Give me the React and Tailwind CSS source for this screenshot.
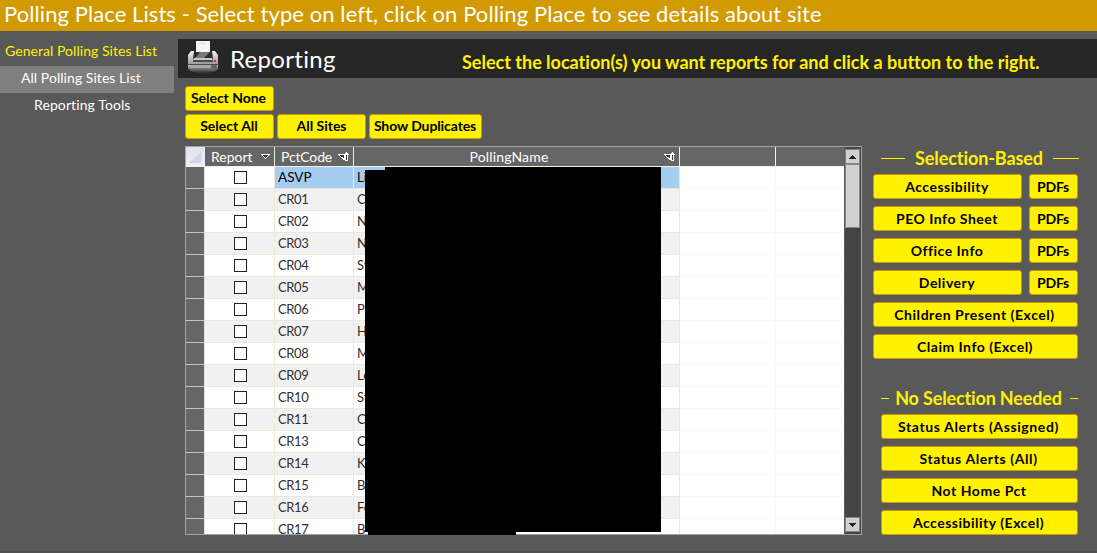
const rows = [
  ["ASVP", "Li"], ["CR01", "C"], ["CR02", "N"], ["CR03", "N"], ["CR04", "St"], ["CR05", "M"],
  ["CR06", "P"], ["CR07", "H"], ["CR08", "M"], ["CR09", "Le"], ["CR10", "St"], ["CR11", "C"],
  ["CR13", "C"], ["CR14", "K"], ["CR15", "B"], ["CR16", "Fe"], ["CR17", "B"],
];

function Button({ children, className = "pr-px tracking-[0.5px]" }) {
  return (
    <button
      className={`flex h-[25px] items-center justify-center whitespace-nowrap rounded-[3px] border border-[#d19a00] bg-[#fff200] text-[14px] leading-none font-bold text-black ${className}`}
    >
      {children}
    </button>
  );
}

function PrinterIcon() {
  return (
    <svg width="32" height="34" viewBox="0 0 32 34" className="block">
      <defs>
        <linearGradient id="side" x1="0" y1="0" x2="0" y2="1">
          <stop offset="0" stopColor="#f4f4f4" />
          <stop offset="1" stopColor="#9a9a9a" />
        </linearGradient>
        <linearGradient id="base" x1="0" y1="0" x2="0" y2="1">
          <stop offset="0" stopColor="#c4c4c4" />
          <stop offset="0.45" stopColor="#777" />
          <stop offset="1" stopColor="#303030" />
        </linearGradient>
      </defs>
      <path d="M1 25h30v4q-3 4-15 4T1 29z" fill="url(#base)" />
      <path d="M4 11h24l3 4v9H1v-9z" fill="url(#side)" />
      <path d="M7 11h18l1 8H6z" fill="#2c2c2c" />
      <path d="M13 12h10l-6 6H8z" fill="#777" />
      <path d="M9 1h14v11H9z" fill="#f7f7f7" />
      <path d="M11 3h8v1h-8z" fill="#ddd" />
      <path d="M7 18h18v2H7z" fill="#c9c9c9" />
      <path d="M6 20h20v2H6z" fill="#4c4c4c" />
      <path d="M0 24h32v1H0z" fill="#4a4a4a" />
      <path d="M3 25h20v3H3z" fill="#a9a9a9" />
      <path d="M24 25h6v4h-6z" fill="#686868" />
      <path d="M27 20h2v2h-2z" fill="#dc2348" />
      <path d="M27 26h2v2h-2z" fill="#35694e" />
    </svg>
  );
}

function FilterArrow() {
  return (
    <svg width="9" height="6" viewBox="0 0 9 6" className="block" shapeRendering="crispEdges">
      <path d="M0 0h9v1H8v1H7v1H6v1H5v1H4V4H3V3H2V2H1V1H0z" fill="#fff" />
      <path d="M2 1h5v1H6v1H5v1H4V3H3V2H2z" fill="#26364d" />
    </svg>
  );
}

function SortArrow() {
  return (
    <svg width="11" height="9" viewBox="0 0 11 9" className="block" shapeRendering="crispEdges">
      <path d="M0 2h7v6H5V7H4V6H3V5H2V4H1V3H0z" fill="#fff" />
      <path d="M2 3h4v3H5V5H3V4H2z" fill="#26364d" />
      <path d="M8 0h1v1h1v1h1v1h-1v6H7V3H6V2h1V1h1z" fill="#fff" />
      <path d="M8 3h1v5H8z" fill="#26364d" />
    </svg>
  );
}

function ScrollButton({ down = false }) {
  return (
    <div className="flex h-[15px] w-[15px] shrink-0 items-center justify-center border border-[#858585] bg-[#d0d0d0]">
      <svg width="7" height="4" viewBox="0 0 7 4" shapeRendering="crispEdges">
        <path d={down ? "M0 0h7v1H6v1H5v1H4v1H3V3H2V2H1V1H0z" : "M3 0h1v1h1v1h1v1h1v1H0V3h1V2h1V1h1z"} fill="#222" />
      </svg>
    </div>
  );
}

function GridHeader() {
  return (
    <div className="flex h-5 shrink-0 border-b border-[#f4f2e6] bg-[#666] text-[14px] leading-[18px]">
      <div className="flex w-[19px] items-end justify-end border-r border-[#f0f0f0] bg-linear-to-b from-[#dfe3ea] to-[#eceff5] pr-[3px] pb-[3px]">
        <svg width="12" height="11" viewBox="0 0 12 11"><path d="M12 0v11H0z" fill="#c9d7e8" /></svg>
      </div>
      <div className="flex w-[70px] items-center justify-between border-r border-[#e8e8e0] pr-[4px] pl-[6px]">
        <span>Report</span>
        <FilterArrow />
      </div>
      <div className="flex w-[79px] items-center justify-between border-r border-[#e8e8e0] pr-[4px] pl-[6px]">
        <span className="tracking-[-0.15px]">PctCode</span>
        <SortArrow />
      </div>
      <div className="flex w-[326px] items-center border-r border-[#f2f0e4] pr-[4px]">
        <span className="flex-1 text-center tracking-[0.15px]">PollingName</span>
        <SortArrow />
      </div>
      <div className="w-24 border-r border-[#f2f2f2]" />
    </div>
  );
}

function GridRow({ code, name, selected, striped }) {
  const shade = striped ? "bg-[#f1f1f1]" : "bg-white";
  const cell = selected ? "bg-[#a5cdf0] text-black" : `${shade} text-[#303030]`;
  return (
    <div className="flex h-[22px] shrink-0 text-[13px] leading-[21px]">
      <div className="w-[19px] border-r border-b border-r-[#e4e4e4] border-b-[#c4c4c4] bg-[#666]" />
      <div className={`flex w-[70px] justify-center border-r border-b border-[#ece9dc] pt-1 pl-[1px] ${shade}`}>
        <span className="h-[13px] w-[13px] border border-[#222] bg-white" />
      </div>
      <div className={`w-[79px] border-r border-b border-[#ece9dc] pl-[3px] ${cell}`}>
        <span className={selected ? "text-[13.5px]" : "tracking-[-0.4px]"}>{code}</span>
      </div>
      <div className={`w-[326px] border-r border-b border-[#ece9dc] pl-[3px] ${cell}`}>{name}</div>
      <div className="w-24 border-r border-b border-[#f9f9f5] bg-white" />
      <div className="flex-1 border-b border-[#f9f9f5] bg-white" />
    </div>
  );
}

function DataGrid() {
  return (
    <div className="relative mt-[7px] flex h-[389px] w-[677px] border border-[#a3a3a3]">
      <div className="flex w-[658px] flex-col overflow-hidden">
        <GridHeader />
        {rows.map(([code, name], i) => (
          <GridRow key={code} code={code} name={name} selected={i === 0} striped={i % 2 === 1} />
        ))}
      </div>
      <div className="flex w-[17px] flex-col border-l border-[#595959] bg-[#444] pt-[2px] pr-px pb-[2px]">
        <ScrollButton />
        <div className="h-[64px] w-[15px] border border-[#858585] bg-[#d0d0d0]" />
        <div className="flex-1" />
        <ScrollButton down />
      </div>
      <div className="absolute top-[23px] left-[179px] h-[362px] w-5 bg-black" />
      <div className="absolute top-[20px] left-[199px] h-[365px] w-[276px] bg-black" />
      <div className="absolute top-[385px] left-[182px] h-[3px] w-[148px] bg-black" />
    </div>
  );
}

function SectionTitle({ children, left, right, className }) {
  return (
    <div className={`flex h-6 w-[198px] items-center justify-between text-[18px] leading-6 font-bold whitespace-nowrap text-[#fff200] ${className}`}>
      <span className={`h-px bg-[#fff200] ${left}`} />
      <span>{children}</span>
      <span className={`h-px bg-[#fff200] ${right}`} />
    </div>
  );
}

export default function App() {
  return (
    <div className="flex h-[553px] w-[1097px] flex-col overflow-hidden border-b-2 border-[#525252] bg-[#595959] font-['Lato',sans-serif] text-white [font-variant-ligatures:none]">
      <header className="h-[31px] shrink-0 bg-[#d19a00] pl-[4px] text-[22px] leading-[27px] tracking-[0.08px] whitespace-nowrap">
        Polling Place Lists - Select type on left, click on Polling Place to see details about site
      </header>
      <div className="flex flex-1">
        <nav className="w-[174px] shrink-0 pt-[8px] text-[14px] leading-[24px] whitespace-nowrap">
          <div className="h-[27px] pl-[5px] tracking-[0.05px] text-[#fff200]">General Polling Sites List</div>
          <div className="h-[27px] bg-[#7f7f7f] pl-[21px] tracking-[0.05px]">All Polling Sites List</div>
          <div className="h-[27px] pl-[34px] tracking-[0.1px]">Reporting Tools</div>
        </nav>
        <main className="ml-1 flex-1 pt-[8px]">
          <div className="flex h-[39px] bg-[#262626]">
            <div className="pt-[1px] pl-[9px]"><PrinterIcon /></div>
            <h1 className="ml-[11px] w-[232px] text-[24px] leading-[39px] tracking-[0.3px]">Reporting</h1>
            <p className="text-[18px] leading-[46px] font-bold whitespace-nowrap text-[#fff200]">
              Select the location(s) you want reports for and click a button to the right.
            </p>
          </div>
          <div className="flex pl-[7px]">
            <div className="w-[677px] pt-[8px]">
              <Button className="w-[89px] pr-[2px] pb-px tracking-[-0.03px]">Select None</Button>
              <div className="mt-[3px] flex gap-[3px]">
                <Button className="w-[89px] pr-px pb-px">Select All</Button>
                <Button className="w-[89px] pb-px">All Sites</Button>
                <Button className="w-[113px] pr-px pb-px tracking-[-0.1px]">Show Duplicates</Button>
              </div>
              <DataGrid />
            </div>
            <div className="ml-[11px] w-[205px] pt-[68px]">
              <SectionTitle className="ml-2 tracking-[-0.1px]" left="w-6" right="w-[26px]">Selection-Based</SectionTitle>
              <div className="mt-1 grid grid-cols-[149px_49px] gap-[7px]">
                <Button>Accessibility</Button>
                <Button className="pr-px tracking-[-0.2px]">PDFs</Button>
                <Button>PEO Info Sheet</Button>
                <Button className="pr-px tracking-[-0.2px]">PDFs</Button>
                <Button>Office Info</Button>
                <Button className="pr-px tracking-[-0.2px]">PDFs</Button>
                <Button>Delivery</Button>
                <Button className="pr-px tracking-[-0.2px]">PDFs</Button>
                <Button className="col-span-2 pr-[2px] tracking-[0.55px]">Children Present (Excel)</Button>
                <Button className="col-span-2 pr-px tracking-[0.5px]">Claim Info (Excel)</Button>
              </div>
              <SectionTitle className="mt-[27px] ml-2 pr-px tracking-[-0.15px]" left="mr-[5px] w-[8px]" right="ml-[7px] w-[8px]">No Selection Needed</SectionTitle>
              <div className="mt-1 ml-2 grid gap-[7px]">
                <Button className="pr-[2px] tracking-[0.6px]">Status Alerts (Assigned)</Button>
                <Button className="pr-[2px] tracking-[0.6px]">Status Alerts (All)</Button>
                <Button className="pr-px tracking-[0.55px]">Not Home Pct</Button>
                <Button className="pr-[2px] tracking-[0.5px]">Accessibility (Excel)</Button>
              </div>
            </div>
          </div>
        </main>
      </div>
    </div>
  );
}
